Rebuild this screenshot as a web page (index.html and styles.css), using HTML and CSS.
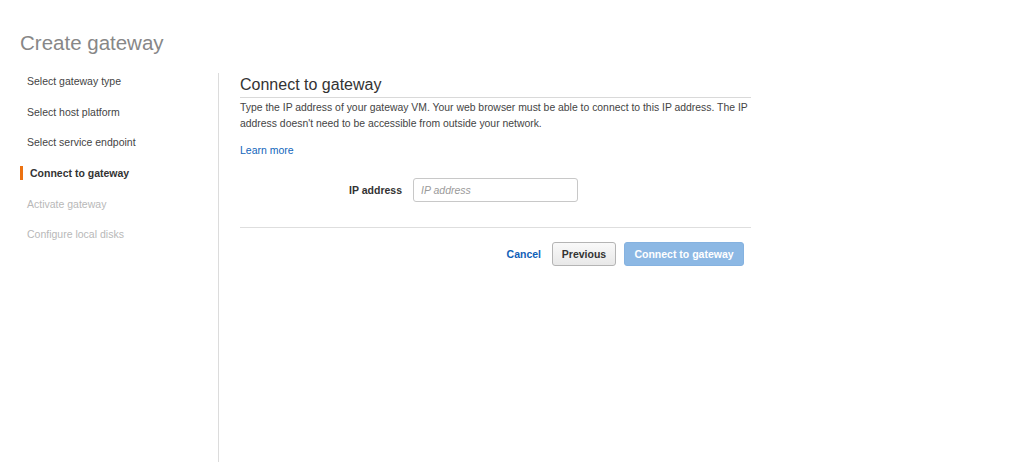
FILE: index.html
```html
<!DOCTYPE html>
<html lang="en">
<head>
<meta charset="utf-8">
<title>Create gateway</title>
<link rel="stylesheet" href="styles.css">
</head>
<body>
<div class="page">
  <h1 class="page-title">Create gateway</h1>
  <div class="layout">
    <nav class="steps">
      <div class="step">Select gateway type</div>
      <div class="step">Select host platform</div>
      <div class="step">Select service endpoint</div>
      <div class="step step-active">Connect to gateway</div>
      <div class="step step-disabled">Activate gateway</div>
      <div class="step step-disabled">Configure local disks</div>
    </nav>
    <main class="content">
      <h2 class="section-title">Connect to gateway</h2>
      <p class="desc">Type the IP address of your gateway VM. Your web browser must be able to connect to this IP address. The IP address doesn't need to be accessible from outside your network.</p>
      <a class="learn" href="#">Learn more</a>
      <div class="field">
        <label class="field-label" for="ip">IP address</label>
        <input class="field-input" id="ip" type="text" placeholder="IP address">
      </div>
      <div class="actions">
        <a class="cancel" href="#">Cancel</a>
        <button class="btn btn-secondary" type="button">Previous</button>
        <button class="btn btn-primary" type="button">Connect to gateway</button>
      </div>
    </main>
  </div>
</div>
</body>
</html>
```
FILE: styles.css
```css
* { box-sizing: border-box; }
html, body { margin: 0; padding: 0; background: #fff; }
body {
  font-family: "Liberation Sans", Arial, Helvetica, sans-serif;
  color: #333;
  width: 1020px;
  height: 467px;
  overflow: hidden;
}
.page { padding: 31px 0 0 20px; }
.page-title {
  margin: 0 0 18px 0;
  font-size: 20.5px;
  line-height: 24px;
  font-weight: normal;
  color: #878787;
}
.layout { display: flex; }
.steps {
  width: 199px;
  height: 389px;
  border-right: 1px solid #dcdcdc;
  padding-top: 1px;
  display: flex;
  flex-direction: column;
  gap: 16.7px;
}
.step {
  font-size: 10.5px;
  line-height: 14px;
  color: #444;
  padding-left: 7px;
}
.step-active {
  font-weight: bold;
  color: #333;
  border-left: 3px solid #ec7211;
  padding-left: 7px;
}
.step-disabled { color: #b8b8b8; }
.content {
  width: 532px;
  padding-left: 21px;
  display: flex;
  flex-direction: column;
  align-items: flex-start;
}
.section-title {
  align-self: stretch;
  margin: 2px 0 0 0;
  font-size: 16px;
  line-height: 20px;
  font-weight: normal;
  color: #333;
  padding-bottom: 2px;
  border-bottom: 1px solid #d9d9d9;
}
.desc {
  width: 516px;
  margin: 2px 0 0 0;
  font-size: 10.4px;
  line-height: 16px;
  color: #444;
}
.learn {
  margin-top: 10px;
  font-size: 10.5px;
  line-height: 16px;
  color: #1166bb;
  text-decoration: none;
}
.field {
  margin-top: 20px;
  display: flex;
  align-items: center;
  gap: 11px;
}
.field-label {
  width: 162px;
  text-align: right;
  font-size: 10.5px;
  font-weight: bold;
  color: #333;
}
.field-input {
  width: 165px;
  height: 24px;
  border: 1px solid #c8c8c8;
  border-radius: 3px;
  padding: 0 7px;
  font-family: inherit;
  font-size: 10.5px;
  color: #333;
  outline: none;
}
.field-input::placeholder { color: #9a9a9a; font-style: italic; }
.actions {
  align-self: stretch;
  margin-top: 25px;
  border-top: 1px solid #dedede;
  padding: 14px 7px 0 0;
  display: flex;
  justify-content: flex-end;
  align-items: center;
  gap: 8px;
}
.cancel {
  font-size: 10.5px;
  font-weight: bold;
  color: #1060b8;
  text-decoration: none;
  margin-right: 3px;
}
.btn {
  height: 24px;
  border-radius: 3px;
  font-family: inherit;
  font-size: 10.5px;
  font-weight: bold;
  padding: 0;
  cursor: pointer;
}
.btn-secondary {
  width: 64px;
  color: #333;
  background: linear-gradient(#f9f9f9, #e8e8e8);
  border: 1px solid #b4b4b4;
}
.btn-primary {
  width: 120px;
  color: #fff;
  background: #8cb8e4;
  border: 1px solid #85b2e0;
}
```
